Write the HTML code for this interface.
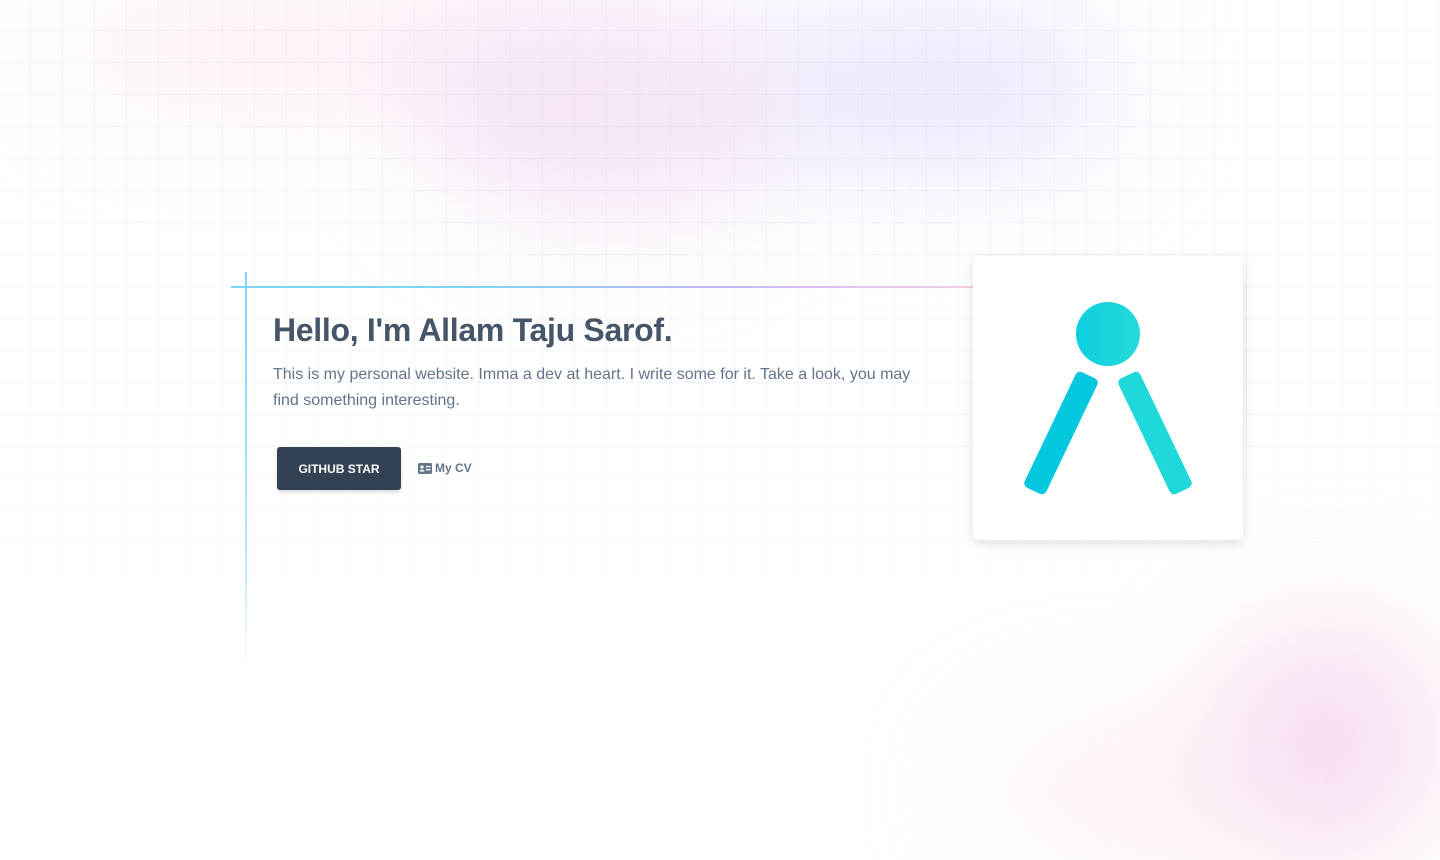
<!DOCTYPE html>
<html><head><meta charset="utf-8"><style>
html,body{margin:0;padding:0;width:1440px;height:860px;overflow:hidden;background:#fff;font-family:"Liberation Sans",sans-serif;position:relative;}
.bg{position:absolute;left:0;top:0;width:1440px;height:860px;overflow:hidden;}
.blob{position:absolute;border-radius:50%;filter:blur(60px);}
.grid{position:absolute;left:0;top:0;width:1440px;height:620px;overflow:hidden;
background-image:linear-gradient(to right,rgba(200,200,220,.18) 1px,transparent 1px),linear-gradient(to bottom,rgba(200,200,220,.18) 1px,transparent 1px);
background-size:32px 32px;background-position:30px 30px;
-webkit-mask-image:linear-gradient(to bottom,#000 60%,transparent 100%);mask-image:linear-gradient(to bottom,#000 60%,transparent 100%);}
.hl{position:absolute;left:231px;top:286px;width:742px;height:2px;background:linear-gradient(to right,#7dd3fc 0%,#7dd3fc 35%,#c4b5fd 65%,#f5d0e0 100%);}
.vl{position:absolute;left:245px;top:272px;width:2px;height:400px;background:linear-gradient(to bottom,#7dd3fc 0%,#bae6fd 70%,rgba(255,255,255,0) 100%);}
h1{position:absolute;left:273px;top:312px;margin:0;font-size:32px;font-weight:700;color:#475569;letter-spacing:-0.3px;}
p{position:absolute;left:273px;top:362px;margin:0;width:650px;font-size:16px;line-height:26px;color:#64748b;}
.btn{position:absolute;left:277px;top:447px;width:124px;height:43px;background:#334155;border-radius:3px;color:#fff;font-size:12px;font-weight:700;display:flex;align-items:center;justify-content:center;box-shadow:0 2px 4px rgba(0,0,0,.15);}
.cv{position:absolute;left:418px;top:461px;font-size:12px;font-weight:700;color:#64748b;display:flex;align-items:center;gap:3px;}
.card{position:absolute;left:973px;top:256px;width:270px;height:284px;background:#fff;border-radius:6px;box-shadow:0 4px 12px rgba(0,0,0,.12);}
</style></head><body>
<div class="bg">
<div class="blob" style="left:40px;top:0;width:500px;height:100px;background:rgba(244,200,230,.35)"></div>
<div class="blob" style="left:420px;top:0;width:380px;height:220px;background:rgba(230,190,235,.4)"></div>
<div class="blob" style="left:760px;top:0;width:360px;height:180px;background:rgba(215,205,250,.45)"></div>
<div class="blob" style="left:1220px;top:620px;width:220px;height:240px;background:rgba(240,195,230,.55)"></div>
<div class="blob" style="left:980px;top:720px;width:300px;height:140px;background:rgba(248,215,235,.35)"></div>
</div>
<div class="grid"></div>
<div class="hl"></div><div class="vl"></div>
<h1>Hello, I'm Allam Taju Sarof.</h1>
<p>This is my personal website. Imma a dev at heart. I write some for it. Take a look, you may find something interesting.</p>
<div class="btn">GITHUB STAR</div>
<div class="cv"><svg width="14" height="11" viewBox="0 0 14 11"><rect width="14" height="11" rx="1.5" fill="#64748b"/><circle cx="4" cy="4" r="1.6" fill="#fff"/><path d="M1.5 8.5c.4-1.5 1.4-2 2.5-2s2.1.5 2.5 2z" fill="#fff"/><rect x="8" y="3" width="4.5" height="1.3" fill="#fff"/><rect x="8" y="6" width="4.5" height="1.3" fill="#fff"/></svg>My CV</div>
<div class="card">
<svg width="270" height="284" viewBox="973 256 270 284" style="position:absolute;left:0;top:0">
<defs><linearGradient id="g" x1="0" x2="1"><stop offset="0" stop-color="#0ccfde"/><stop offset="1" stop-color="#26dad8"/></linearGradient></defs>
<circle cx="1108" cy="334" r="32" fill="url(#g)" />
<rect x="1049" y="369" width="24" height="128" rx="5" fill="#03c9df" transform="rotate(25.5 1061 433)"/>
<rect x="1143" y="369" width="24" height="128" rx="5" fill="#1fd8da" transform="rotate(-25.5 1155 433)"/>
</svg>
</div>
</body></html>
